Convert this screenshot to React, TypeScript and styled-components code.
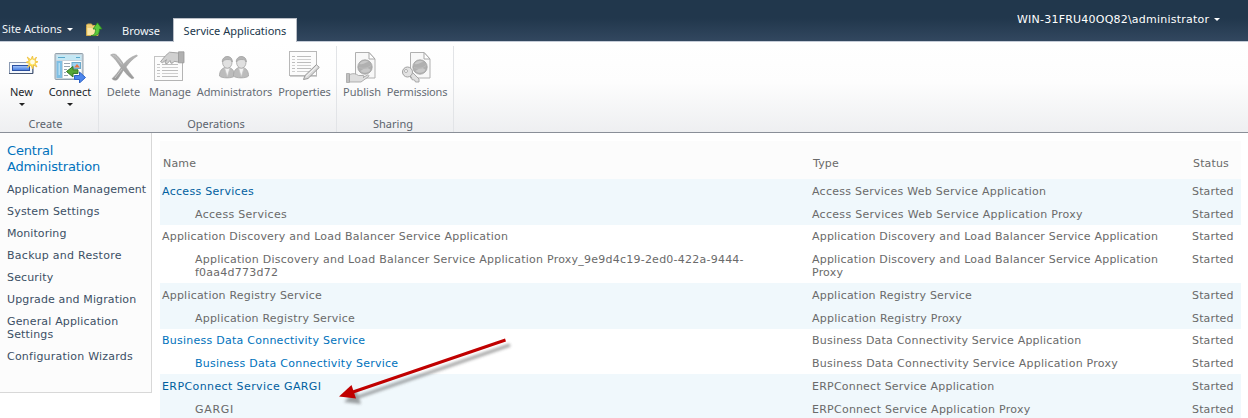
import React from "react";
import styled, { createGlobalStyle } from "styled-components";

const Global = createGlobalStyle`
  * { box-sizing: border-box; }
  body { margin: 0; background: #fff; overflow: hidden; }
`;

const ui = `"Noto Sans", "Open Sans", sans-serif`;
const verdana = `"DejaVu Sans", Verdana, sans-serif`;

const Page = styled.div`
  position: relative;
  width: 1248px;
  height: 418px;
  overflow: hidden;
  font: 11px/13px ${verdana};
  color: #6a6a6a;
`;
const TopBar = styled.header`
  display: flex;
  height: 42px;
  background: linear-gradient(#21374c 0, #21374c 18px, #32475f 41px);
  border-bottom: 1px solid #c5ccd8;
  color: #fff;
`;
const BarText = styled.div<{ $w: number; $top: number; $left?: number }>`
  width: ${(p) => p.$w}px;
  padding: ${(p) => p.$top}px 0 0 ${(p) => p.$left ?? 0}px;
  font: 11px/16px ${ui};
  color: #f2f5f8;
  white-space: nowrap;
`;
const Caret = styled.span<{ $dark?: boolean }>`
  display: inline-block;
  margin-left: ${(p) => (p.$dark ? 0 : 5)}px;
  vertical-align: ${(p) => (p.$dark ? "top" : "2px")};
  border: solid transparent;
  border-width: 3px 3px 0;
  border-top-color: ${(p) => (p.$dark ? "#222" : "#fff")};
`;
const FolderSlot = styled.div`
  width: 36px;
  padding-top: 22px;
  svg { display: block; }
`;
const ActiveTab = styled.div`
  width: 124px;
  height: 24px;
  margin-top: 18px;
  padding-top: 4px;
  border: 1px solid #b9bec6;
  border-bottom: 0;
  background: #fff;
  color: #21374c;
  text-align: center;
  font: 11px/16px ${ui};
  white-space: nowrap;
`;
const User = styled.div`
  margin-left: auto;
  width: 231px;
  padding-top: 13px;
  white-space: nowrap;
  letter-spacing: 0.22px;
`;
const Ribbon = styled.div`
  display: flex;
  height: 91px;
  padding-top: 4px;
  background: linear-gradient(#fff 0, #fdfdfd 45%, #eeeff1 100%);
  border-bottom: 1px solid #8a8f98;
`;
const Group = styled.section<{ $w: number; $pad: number }>`
  display: flex;
  flex-direction: column;
  justify-content: space-between;
  width: ${(p) => p.$w}px;
  border-right: 1px solid #e2e4e7;
  > div { display: flex; padding-left: ${(p) => p.$pad}px; }
`;
const GroupLabel = styled.span<{ $shift?: number }>`
  font: 11px/16px ${ui};
  color: #5b636d;
  text-align: center;
  padding-right: ${(p) => p.$shift ?? 0}px;
`;
const Tool = styled.div<{ $w: number; $on?: boolean; $ls?: number }>`
  display: flex;
  flex-direction: column;
  align-items: center;
  width: ${(p) => p.$w}px;
  padding-top: 5px;
  font: 11px/16px ${ui};
  letter-spacing: ${(p) => p.$ls ?? 0}px;
  color: ${(p) => (p.$on ? "#23272c" : "#666c75")};
  white-space: nowrap;
  svg { display: block; margin-bottom: 1px; flex: none; }
  ${Caret} { margin-top: 3px; }
`;
const Body = styled.div`
  display: flex;
  align-items: flex-start;
`;
const Side = styled.nav`
  width: 152px;
  height: 260px;
  padding: 10px 0 0 7px;
  background: #fcfcfc;
  border: solid #d8d8d8;
  border-width: 0 1px 1px 0;
  color: #3b4f65;
`;
const SideTitle = styled.div`
  margin-bottom: 8px;
  font-size: 13px;
  line-height: 16px;
  color: #0072bc;
  letter-spacing: -0.15px;
`;
const SideItem = styled.div<{ $ls: number }>`
  margin-bottom: 9px;
  white-space: pre;
  letter-spacing: ${(p) => p.$ls}px;
`;
const Table = styled.div`
  width: 1081px;
  margin: 8px 0 0 8px;
`;
const Row = styled.div<{ $h: number; $alt?: boolean; $top?: number }>`
  display: grid;
  grid-template-columns: 650px 380px 1fr;
  height: ${(p) => p.$h}px;
  padding: ${(p) => p.$top ?? 6}px 0 0 2px;
  background: ${(p) => (p.$alt ? "#f0f8fc" : "#fff")};
  white-space: pre;
`;
const Head = styled(Row)`
  background: #fcfcfc;
  padding: 16px 0 0 3px;
  letter-spacing: 0.15px;
`;
const Cell = styled.span<{ $ls: number; $child?: boolean; $link?: string }>`
  padding-left: ${(p) => (p.$child ? 33 : 0)}px;
  color: ${(p) => p.$link ?? "inherit"};
  letter-spacing: ${(p) => p.$ls}px;
`;
const ArrowNote = styled.svg`
  position: absolute;
  left: 330px;
  top: 330px;
`;

const FolderUp = () => (
  <svg width="17" height="16" viewBox="0 0 17 16">
    <path d="M.5 4.500V3l1-1h4l1 1.500h5.500v10H.5z" fill="#efcf77" stroke="#d0aa4c" />
    <path d="M1.500 6h9.500v7H1.500z" fill="#fbe7a6" />
    <path d="M5 13.500c3.500 0 4.500-2.500 4.500-6.500H7L11.500.8 16 7h-2.500c0 5-2.500 7.500-8.500 6.500z" fill="#5ccb3c" stroke="#2c8a1e" strokeWidth=".8" />
  </svg>
);

const NewIcon = () => (
  <svg width="32" height="32" viewBox="0 0 32 32">
    <defs>
      <linearGradient id="nb" x2="0" y2="1"><stop stopColor="#a9c8fa" /><stop offset="1" stopColor="#3e78e0" /></linearGradient>
    </defs>
    <rect x="3.500" y="11.500" width="23" height="11" fill="#f4f8fd" stroke="#8c9bb3" />
    <path d="M3 22.500h24V12" fill="none" stroke="#465672" />
    <rect x="6.500" y="14.500" width="17" height="5" fill="url(#nb)" stroke="#2c50a0" />
    <path d="M26.500 5l1 4 3-3-1.500 4 3 .8-3 1.400 2 3.800-3.500-2-1 4-1.500-4-3.500 2.500 2-4-3.500-1.200 3.200-1.300-2-4 3.500 2.700z" fill="#ffe45c" stroke="#edbd38" strokeWidth=".8" />
    <circle cx="26.500" cy="11" r="2.400" fill="#fffde4" />
  </svg>
);

const ConnectIcon = () => (
  <svg width="32" height="32" viewBox="0 0 32 32">
    <rect x="1" y="2.500" width="28" height="26" rx="1" fill="#c9d4dc" stroke="#93a2ad" />
    <path d="M2.500 4h25v5h-25z" fill="#c4e7f4" />
    <path d="M4 6.500h7M22 6.500h4" stroke="#5aa9cc" />
    <path d="M2.500 10H8v17H2.500z" fill="#7fbfe4" />
    <path d="M4.500 12h1.500v12H4.500z" fill="#b7def2" />
    <path d="M9 10h18.500v17H9z" fill="#fff" />
    <path d="M10 12.500h6M10 15.500h6M10 18.500h3M10 21.500h2M10 24.500h4" stroke="#99a4b0" />
    <rect x="18" y="11.500" width="8.500" height="6" fill="#9dd0ef" stroke="#6ca9cb" />
    <path d="M20 16.500l3-3.500 3 3.500z" fill="#e87442" />
    <path d="M12.500 20.500l6.500-5v3.300h5v3.600h-5V26z" fill="#55a636" stroke="#2f7423" />
    <path d="M31.500 26.500L25.500 21v3.500h-5v4h5V32z" fill="#4d86ec" stroke="#2f63c6" />
  </svg>
);

const DeleteIcon = () => (
  <svg width="32" height="32" viewBox="0 0 32 32">
    <defs>
      <linearGradient id="dx" x2="0" y2="1"><stop stopColor="#b8b8b8" /><stop offset="1" stopColor="#989898" /></linearGradient>
    </defs>
    <path d="M2.500 4c2-1.500 5-1.500 6.500.5 3 3 5 6 6.500 8.700 3-3.700 7-7.200 13-9.200l1 .8c-5 3.200-8.500 7-11.500 11.200 2.500 4 5 7.500 8 11l-2 .8c-3.500-2.300-6-5.200-8.500-8.600-2 3-3.500 5.800-5.500 8.500-1.500 2-4 2-6 0 3.500-3.200 6.500-7 9-11C9.500 11.500 7 7.500 2.500 4z" fill="url(#dx)" stroke="#999" strokeWidth=".5" />
    <path d="M5 4.500c2 0 3.500 1.500 4.500 3l4.500 6M7 27l7-9" stroke="#c6c6c6" fill="none" />
  </svg>
);

const lines = (x: number, y0: number, n: number, w: number) =>
  Array.from({ length: n }, (_, i) => (
    <path key={i} d={`M${x} ${y0 + i * 3}h3M${x + 5} ${y0 + i * 3}h${w}`} stroke={i % 2 ? "#cfcfcf" : "#bdbdbd"} />
  ));

const ManageIcon = () => (
  <svg width="32" height="32" viewBox="0 0 32 32">
    <rect x=".5" y="5.500" width="28" height="24" fill="#fcfcfc" stroke="#c4c4c4" />
    {lines(3, 13.5, 5, 16)}
    <path d="M28.500 10v19.500H.5" fill="none" stroke="#b4b4b4" />
    <path d="M24.500 .8h5.500v11h-5.500z" fill="#b0b0b0" stroke="#989898" strokeWidth=".8" />
    <path d="M24.500 2l-9-.8-4 3.500-5 6 2 1 4-3-1.500 3.300 2 .8 3-3.300 1 2.800 2-.5 1-1.500 4.500.8z" fill="#d0d0d0" stroke="#9c9c9c" strokeWidth=".9" />
  </svg>
);

const AdminIcon = () => (
  <svg width="32" height="32" viewBox="0 0 32 32">
    {[-1, 13].map((x) => (
      <g key={x} transform={`translate(${x} 0)`} stroke="#a4a4a4" strokeWidth=".8">
        <path d="M1.500 25c0-5 2-7.500 5.500-8.500h4C14.500 17.500 16.500 20 16.500 25c-2 2.500-13 2.500-15 0z" fill="#bcbcbc" />
        <path d="M6.500 17l2.800 9 2.700-9z" fill="#f3f3f3" stroke="#c4c4c4" />
        <ellipse cx="9.300" cy="11.500" rx="4.700" ry="5.700" fill="#e0e0e0" />
        <path d="M4.300 11C3.800 4 14.800 3.500 14.300 11c-1-2-2-2.500-4.500-2.500s-4 .5-5.500 2.500z" fill="#b6b6b6" />
      </g>
    ))}
  </svg>
);

const PropertiesIcon = () => (
  <svg width="32" height="32" viewBox="0 0 32 32">
    <rect x=".5" y=".5" width="27" height="24" fill="#fcfcfc" stroke="#b8b8b8" />
    <path d="M1 25.500h27" stroke="#d0d0d0" />
    {lines(3, 5.5, 6, 14)}
    <path d="M14.500 28.500l1.500-4L27.500 13.500l2.700 3L19 27.500z" fill="#d9d9d9" stroke="#989898" />
    <path d="M17 25.500l11.500-10.500" stroke="#f6f6f6" />
  </svg>
);

const PageGlobe = () => (
  <>
    <path d="M9.500 1.500H23l6 6.500v19H9.500z" fill="#f8f8f8" stroke="#b0b0b0" />
    <path d="M23 1.500V8h6z" fill="#fff" stroke="#a8a8a8" />
    <circle cx="19" cy="16" r="7.200" fill="#b0b0b0" stroke="#a0a0a0" strokeWidth=".8" />
    <path d="M13.500 13c2-4 7-4 9-2-3 0-4 3-9 2zM14.500 20c3-3 8-4 10-1-2 3-7 4-10 1z" fill="#c8c8c8" />
    <path d="M13 16.500c4 1.500 9 .5 12-2" fill="none" stroke="#bcbcbc" />
  </>
);

const PublishIcon = () => (
  <svg width="32" height="32" viewBox="0 0 32 32">
    <PageGlobe />
    <path d="M.5 22.500h3V31.500h-3z" fill="#c0c0c0" stroke="#a4a4a4" strokeWidth=".8" />
    <path d="M3.500 23.500c4-1.500 6-1 9 1h4.500c1.500 0 1.500 1.500 0 2l4.500-2.500c1.500-.3 2 1 .5 2l-7 5H3.500z" fill="#dedede" stroke="#a0a0a0" strokeWidth=".8" />
  </svg>
);

const PermissionsIcon = () => (
  <svg width="32" height="32" viewBox="0 0 32 32">
    <PageGlobe />
    <path d="M10 20l8 8v3h-3.500l-1-2-2.500-.3-.5-2.500-3.500-2.500z" fill="#e0e0e0" stroke="#a0a0a0" strokeWidth=".9" />
    <circle cx="6.500" cy="21" r="5" fill="#e2e2e2" stroke="#a0a0a0" />
    <circle cx="5" cy="20" r="1.500" fill="#fff" stroke="#a0a0a0" strokeWidth=".8" />
  </svg>
);

// ls holds the tracking of the name and of the type
type Entry = { name: string; type: string; ls: [number, number]; h: number; alt?: boolean; child?: boolean; link?: string; top?: number };
const entries: Entry[] = [
  { name: "Access Services", type: "Access Services Web Service Application", ls: [0.3, 0.26], h: 23, alt: true, link: "#005f9f" },
  { name: "Access Services", type: "Access Services Web Service Application Proxy", ls: [0.3, 0.29], h: 23, alt: true, child: true },
  { name: "Application Discovery and Load Balancer Service Application", type: "Application Discovery and Load Balancer Service Application", ls: [0.2, 0.2], h: 22, top: 5 },
  { name: "Application Discovery and Load Balancer Service Application Proxy_9e9d4c19-2ed0-422a-9444-\nf0aa4d773d72", type: "Application Discovery and Load Balancer Service Application\nProxy", ls: [0.235, 0.2], h: 36, child: true },
  { name: "Application Registry Service", type: "Application Registry Service", ls: [0.21, 0.21], h: 23, alt: true },
  { name: "Application Registry Service", type: "Application Registry Proxy", ls: [0.21, 0.25], h: 23, alt: true, child: true },
  { name: "Business Data Connectivity Service", type: "Business Data Connectivity Service Application", ls: [0.25, 0.21], h: 22, link: "#0072bc", top: 5 },
  { name: "Business Data Connectivity Service", type: "Business Data Connectivity Service Application Proxy", ls: [0.25, 0.24], h: 23, child: true, link: "#0072bc" },
  { name: "ERPConnect Service GARGI", type: "ERPConnect Service Application", ls: [0.4, 0.22], h: 23, alt: true, link: "#005f9f" },
  { name: "GARGI", type: "ERPConnect Service Application Proxy", ls: [0.7, 0.25], h: 23, alt: true, child: true },
];

const sideItems: [string, number][] = [
  ["Application Management", 0.08],
  ["System Settings", 0.2],
  ["Monitoring", 0.06],
  ["Backup and Restore", 0.28],
  ["Security", 0.15],
  ["Upgrade and Migration", 0.13],
  ["General Application\nSettings", 0.16],
  ["Configuration Wizards", 0.22],
];

export default function App() {
  return (
    <Page>
      <Global />
      <TopBar>
        <BarText $w={86} $top={21} $left={2}>Site Actions<Caret /></BarText>
        <FolderSlot><FolderUp /></FolderSlot>
        <BarText $w={51} $top={23}>Browse</BarText>
        <ActiveTab>Service Applications</ActiveTab>
        <User>WIN-31FRU40OQ82\administrator<Caret /></User>
      </TopBar>
      <Ribbon>
        <Group $w={99} $pad={0}>
          <div>
            <Tool $w={43} $on><NewIcon />New<Caret $dark /></Tool>
            <Tool $w={54} $on><ConnectIcon />Connect<Caret $dark /></Tool>
          </div>
          <GroupLabel $shift={7}>Create</GroupLabel>
        </Group>
        <Group $w={238} $pad={4}>
          <div>
            <Tool $w={41}><DeleteIcon />Delete</Tool>
            <Tool $w={52}><ManageIcon />Manage</Tool>
            <Tool $w={77} $ls={-0.08}><AdminIcon />Administrators</Tool>
            <Tool $w={63} $ls={-0.1}><PropertiesIcon />Properties</Tool>
          </div>
          <GroupLabel $shift={3}>Operations</GroupLabel>
        </Group>
        <Group $w={117} $pad={3}>
          <div>
            <Tool $w={44}><PublishIcon />Publish</Tool>
            <Tool $w={66} $ls={-0.2}><PermissionsIcon />Permissions</Tool>
          </div>
          <GroupLabel $shift={4}>Sharing</GroupLabel>
        </Group>
      </Ribbon>
      <Body>
        <Side>
          <SideTitle>Central<br />Administration</SideTitle>
          {sideItems.map(([text, ls]) => <SideItem key={text} $ls={ls}>{text}</SideItem>)}
        </Side>
        <Table>
          <Head $h={38}><span>Name</span><span>Type</span><span>Status</span></Head>
          {entries.map((e, i) => (
            <Row key={i} $h={e.h} $alt={e.alt} $top={e.top}>
              <Cell $ls={e.ls[0]} $child={e.child} $link={e.link}>{e.name}</Cell>
              <Cell $ls={e.ls[1]}>{e.type}</Cell>
              <Cell $ls={0.15}>Started</Cell>
            </Row>
          ))}
        </Table>
      </Body>
      <ArrowNote width="190" height="88" viewBox="0 0 190 88">
        <defs>
          <filter id="soft" x="-10%" y="-10%" width="120%" height="130%"><feGaussianBlur stdDeviation="1.600" /></filter>
        </defs>
        <g transform="translate(5 5)" filter="url(#soft)" opacity=".45">
          <path d="M175 10L20 63" stroke="#333" strokeWidth="3" />
          <path d="M9 67l12-12 5 14z" fill="#333" />
        </g>
        <path d="M175.500 10L20 63" stroke="#c00000" strokeWidth="3" />
        <path d="M9 66.500L21.500 55l4.500 13.500z" fill="#c00000" />
      </ArrowNote>
    </Page>
  );
}
